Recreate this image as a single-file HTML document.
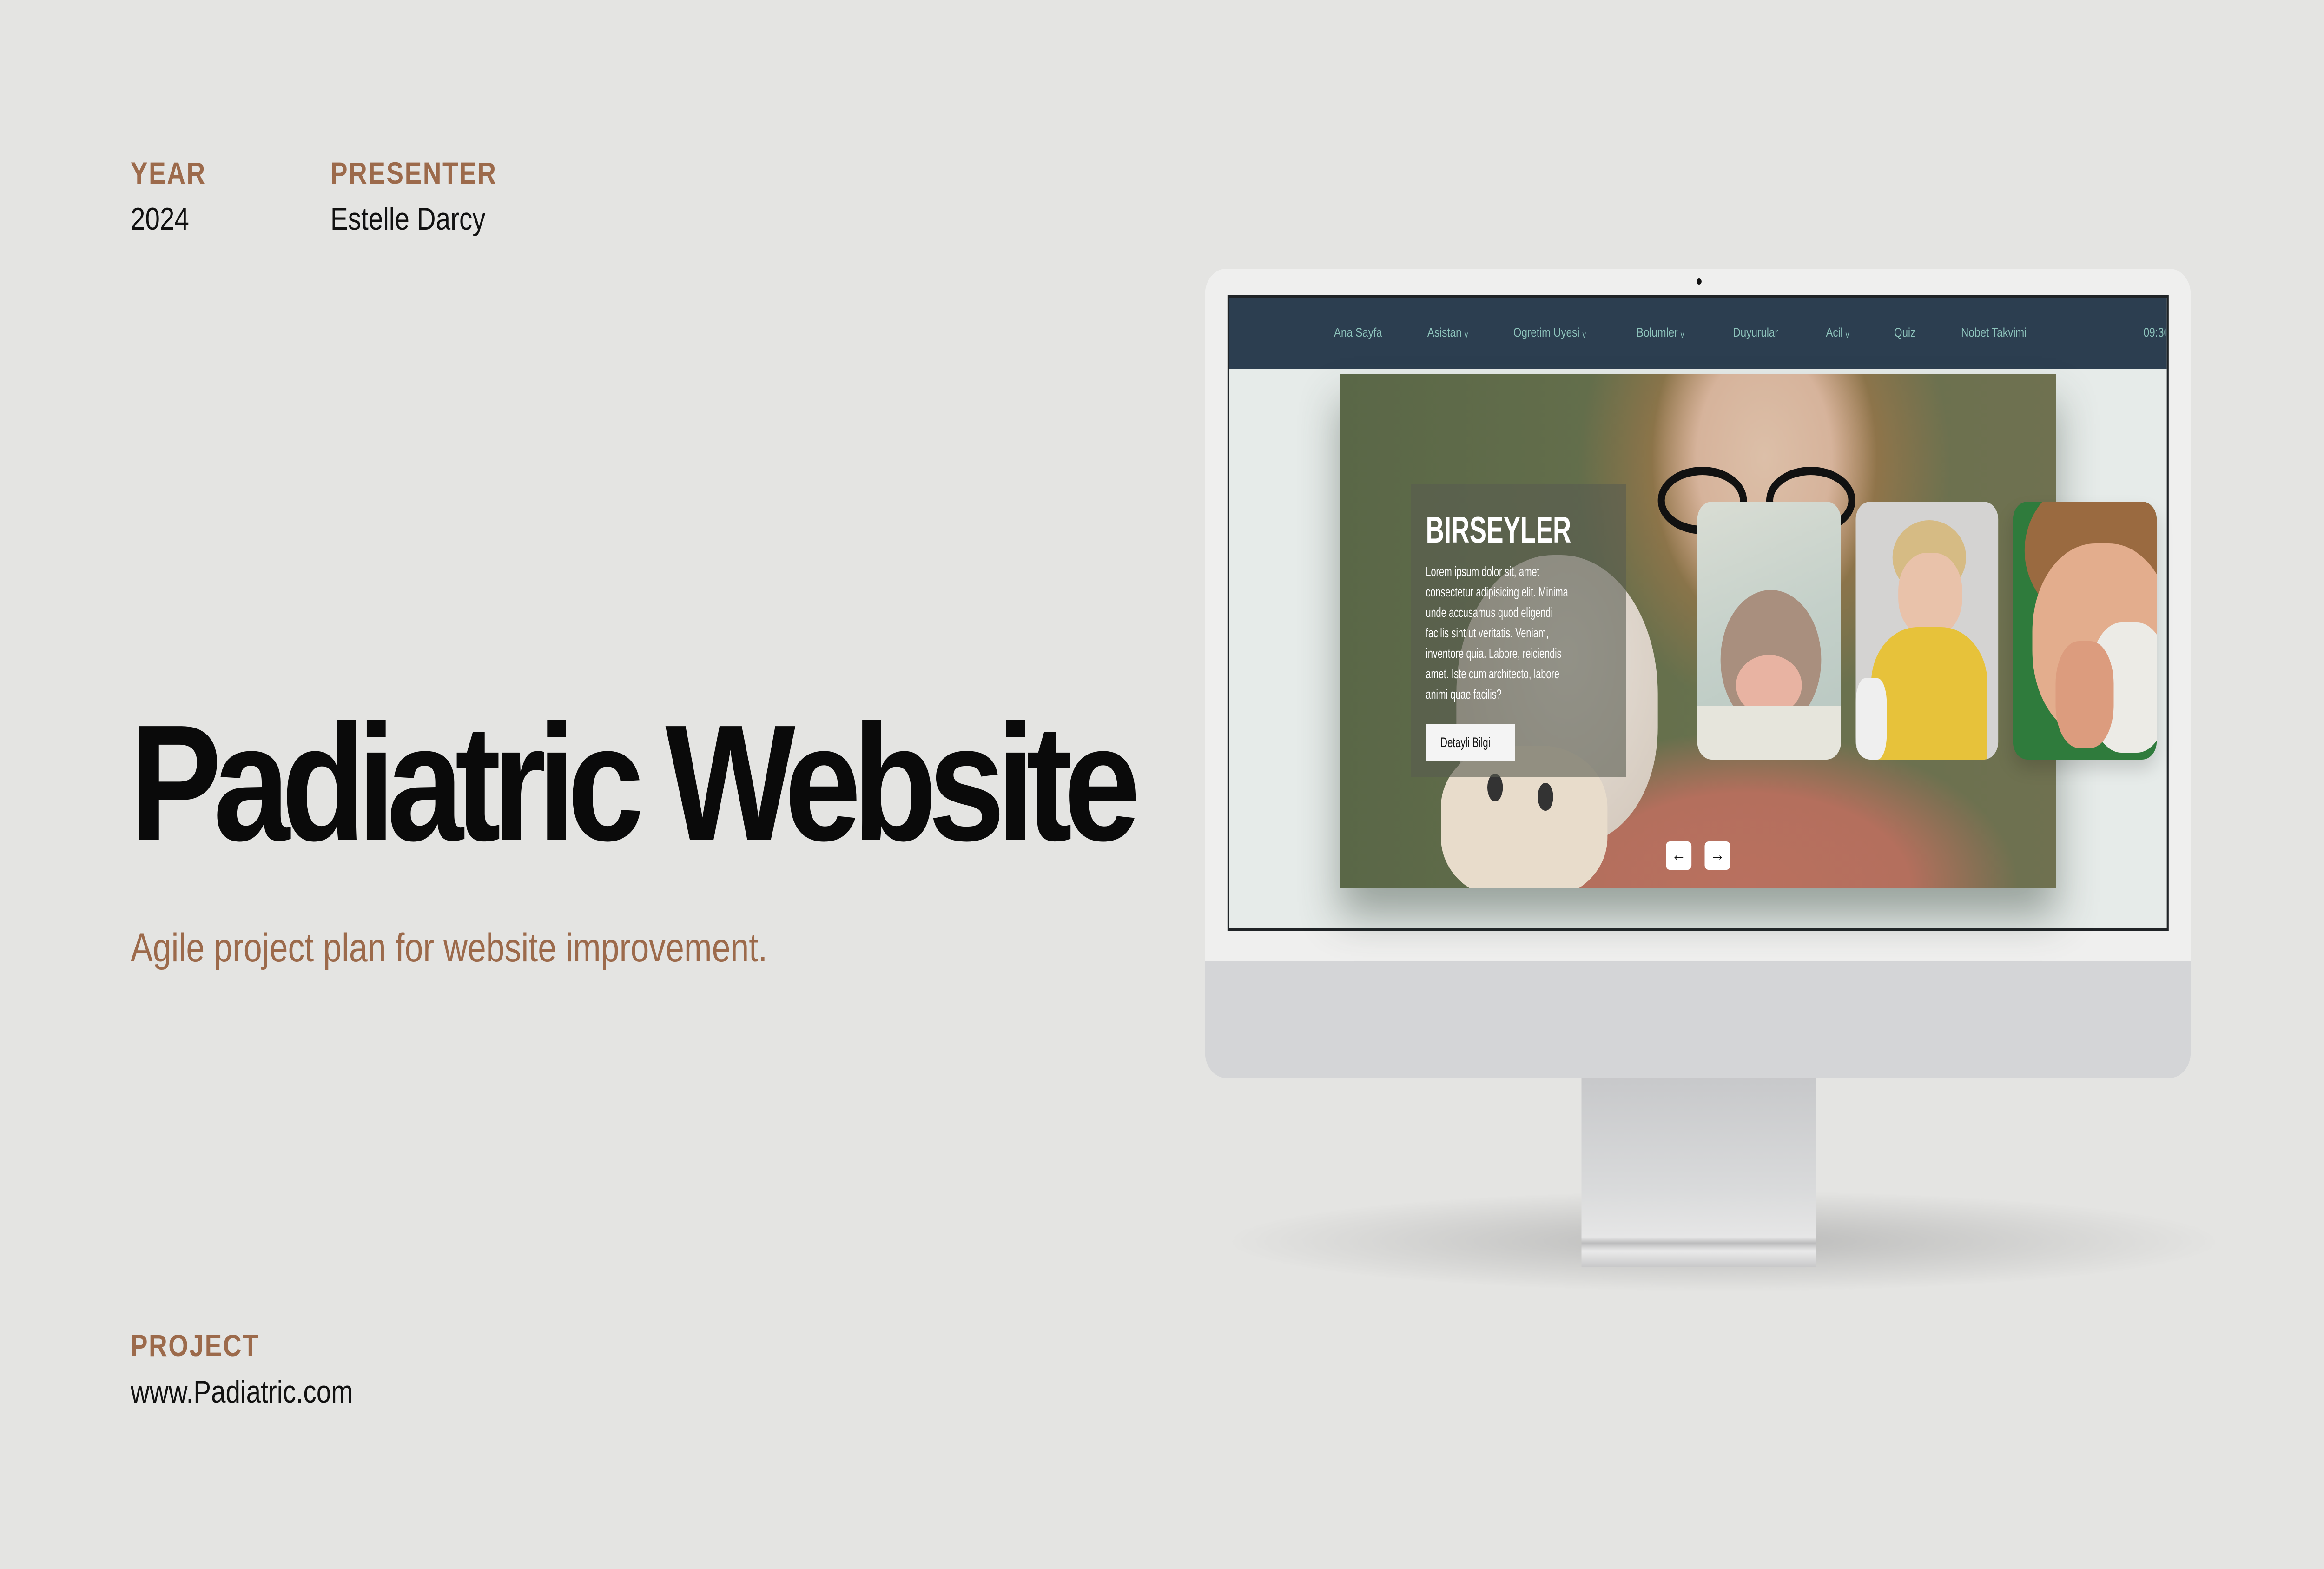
<!DOCTYPE html>
<html><head><meta charset="utf-8"><style>
*{margin:0;padding:0;box-sizing:border-box}
html,body{width:100%;height:100%;overflow:hidden;background:#e4e4e2}
#root{position:relative;width:6000px;height:3375px;background:#e4e4e2;font-family:"Liberation Sans",sans-serif;overflow:hidden}
.a{position:absolute}
.lbl{color:#9c6a4b;font-weight:bold;font-size:66px;letter-spacing:3px}
.val{color:#111;font-size:68px}
.nav{color:#8ec4bc;font-size:27px;top:700px;white-space:nowrap}
.cond{transform-origin:0 0;transform:scaleX(.82);white-space:nowrap}
</style></head><body>
<svg style="position:fixed;left:0;top:0;width:100vw;height:100vh" viewBox="0 0 6000 3375" preserveAspectRatio="none">
<foreignObject x="0" y="0" width="6000" height="3375">
<div id="root">
<div class="a lbl" style="left:337px;top:334px">YEAR</div>
<div class="a lbl" style="left:853px;top:334px">PRESENTER</div>
<div class="a val" style="left:337px;top:432px">2024</div>
<div class="a val" style="left:853px;top:432px">Estelle Darcy</div>
<div class="a" style="left:335px;top:1480px;font-size:356px;font-weight:bold;letter-spacing:-22px;color:#0a0a0a;white-space:nowrap">Padiatric Website</div>
<div class="a" style="left:337px;top:1990px;font-size:86px;color:#9c6a4b;white-space:nowrap">Agile project plan for website improvement.</div>
<div class="a lbl" style="left:337px;top:2856px">PROJECT</div>
<div class="a val" style="left:337px;top:2955px">www.Padiatric.com</div>

<div class="a" style="left:3150px;top:2560px;width:2600px;height:220px;border-radius:50%;background:radial-gradient(ellipse at center,rgba(150,150,150,.55),rgba(200,200,200,0) 70%)"></div>
<div class="a" style="left:4083px;top:2300px;width:605px;height:425px;background:linear-gradient(180deg,#c6c7c9,#d9dadb 60%,#e6e6e6 85%,#bcbcbd 88%,#eaeaea 92%,#c9c9ca)"></div>
<div class="a" style="left:3111px;top:578px;width:2545px;height:1741px;border-radius:55px;background:#efefee;overflow:hidden">
 <div class="a" style="left:0;top:1489px;width:100%;height:252px;background:#d4d5d7"></div>
</div>
<div class="a" style="left:4380px;top:599px;width:13px;height:13px;border-radius:50%;background:#111"></div>
<div class="a" style="left:3169px;top:635px;width:2430px;height:1367px;border:5px solid #1f2326;background:#e6ebe9;overflow:hidden">
 <div class="a" style="left:0;top:0;width:100%;height:153px;background:#2c3e50"></div>
</div>
<div class="a nav" style="left:3444px">Ana Sayfa</div>
<div class="a nav" style="left:3685px">Asistan ᵥ</div>
<div class="a nav" style="left:3907px">Ogretim Uyesi ᵥ</div>
<div class="a nav" style="left:4225px">Bolumler ᵥ</div>
<div class="a nav" style="left:4474px">Duyurular</div>
<div class="a nav" style="left:4714px">Acil ᵥ</div>
<div class="a nav" style="left:4890px">Quiz</div>
<div class="a nav" style="left:5063px">Nobet Takvimi</div>
<div class="a nav" style="left:5534px;width:56px;overflow:hidden">09:30</div>

<div class="a" style="left:3460px;top:804px;width:1848px;height:1106px;overflow:hidden;box-shadow:0 60px 90px rgba(60,75,65,.45);background:
radial-gradient(ellipse 290px 380px at 1095px 180px,#dcbfa8 0%,#d6b39b 60%,rgba(200,150,110,0) 100%),
radial-gradient(ellipse 480px 520px at 1095px 200px,rgba(196,128,80,.85) 0%,rgba(180,120,70,.5) 60%,rgba(120,120,80,0) 100%),
radial-gradient(ellipse 700px 330px at 1050px 1100px,#b9705f 0%,#b46f5d 60%,rgba(150,100,80,0) 100%),
linear-gradient(90deg,#5a6747 0%,#67714d 50%,#6f7150 100%)">
 <div class="a" style="left:820px;top:200px;width:230px;height:145px;border:18px solid #111;border-radius:50%"></div>
 <div class="a" style="left:1100px;top:200px;width:230px;height:145px;border:18px solid #111;border-radius:50%"></div>
 <div class="a" style="left:300px;top:390px;width:520px;height:620px;border-radius:48% 48% 40% 40%;background:radial-gradient(ellipse at 55% 35%,#e9e2da,#cfc3b6)"></div>
 <div class="a" style="left:260px;top:800px;width:430px;height:330px;border-radius:40%;background:#e8dccb"></div>
 <div class="a" style="left:380px;top:860px;width:40px;height:60px;border-radius:50%;background:#333"></div>
 <div class="a" style="left:510px;top:880px;width:40px;height:60px;border-radius:50%;background:#333"></div>
</div>
<div class="a" style="left:3643px;top:1041px;width:555px;height:631px;background:rgba(88,92,80,.6)"></div>
<div class="a cond" style="left:3681px;top:1094px;font-size:80px;font-weight:bold;color:#fff">BIRSEYLER</div>
<div class="a cond" style="left:3681px;top:1208px;font-size:29px;line-height:44px;color:#fff">Lorem ipsum dolor sit, amet<br>consectetur adipisicing elit. Minima<br>unde accusamus quod eligendi<br>facilis sint ut veritatis. Veniam,<br>inventore quia. Labore, reiciendis<br>amet. Iste cum architecto, labore<br>animi quae facilis?</div>
<div class="a" style="left:3681px;top:1557px;width:230px;height:81px;background:#f4f4f4;color:#111"><div class="cond" style="position:absolute;left:38px;top:0;font-size:30px;line-height:81px">Detayli Bilgi</div></div>
<div class="a" style="left:4382px;top:1079px;width:371px;height:555px;border-radius:38px;overflow:hidden;background:linear-gradient(160deg,#d9ddd4,#c4d0c9 50%,#b7c6c0)">
 <div class="a" style="left:60px;top:190px;width:260px;height:300px;border-radius:50%;background:#a98f7e"></div>
 <div class="a" style="left:100px;top:330px;width:170px;height:130px;border-radius:50%;background:#e8b3a2"></div>
 <div class="a" style="left:0;top:440px;width:371px;height:115px;background:#e6e5dc"></div>
</div>
<div class="a" style="left:4791px;top:1079px;width:368px;height:555px;border-radius:38px;overflow:hidden;background:#d4d3d2">
 <div class="a" style="left:95px;top:40px;width:190px;height:160px;border-radius:50%;background:#d6bb84"></div>
 <div class="a" style="left:110px;top:110px;width:165px;height:180px;border-radius:45%;background:#e9c2aa"></div>
 <div class="a" style="left:40px;top:270px;width:300px;height:300px;border-radius:40% 40% 0 0;background:#e7c23a"></div>
 <div class="a" style="left:0;top:380px;width:80px;height:175px;border-radius:30%;background:#efefef"></div>
</div>
<div class="a" style="left:5197px;top:1079px;width:371px;height:555px;border-radius:38px;overflow:hidden;background:#2f7b3c;box-shadow:0 20px 40px rgba(0,0,0,.15)">
 <div class="a" style="left:30px;top:-60px;width:400px;height:330px;border-radius:50%;background:#9a6a40"></div>
 <div class="a" style="left:50px;top:90px;width:360px;height:420px;border-radius:45%;background:#e3ad8d"></div>
 <div class="a" style="left:200px;top:260px;width:200px;height:280px;border-radius:40%;background:#ecebe6"></div>
 <div class="a" style="left:110px;top:300px;width:150px;height:230px;border-radius:40%;background:#dc9c7e"></div>
</div>
<div class="a" style="left:4301px;top:1810px;width:66px;height:61px;background:#fff;border-radius:10px;font-size:38px;line-height:58px;text-align:center;color:#111">←</div>
<div class="a" style="left:4401px;top:1810px;width:66px;height:61px;background:#fff;border-radius:10px;font-size:38px;line-height:58px;text-align:center;color:#111">→</div>
</div>
</foreignObject>
</svg>
</body></html>
